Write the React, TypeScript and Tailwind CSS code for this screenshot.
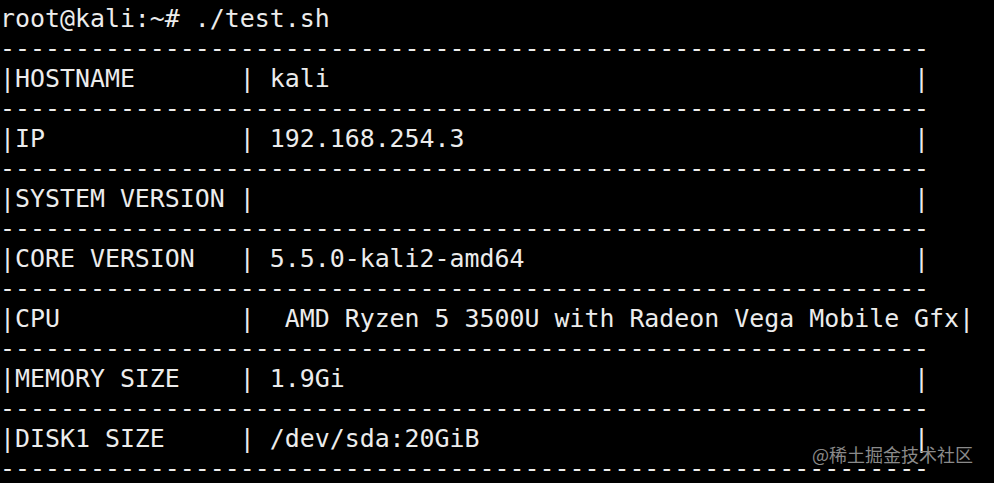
const rows = [
  ["HOSTNAME", " kali"],
  ["IP", " 192.168.254.3"],
  ["SYSTEM VERSION", ""],
  ["CORE VERSION", " 5.5.0-kali2-amd64"],
  ["CPU", "  AMD Ryzen 5 3500U with Radeon Vega Mobile Gfx"],
  ["MEMORY SIZE", " 1.9Gi"],
  ["DISK1 SIZE", " /dev/sda:20GiB"],
];

const divider = "-".repeat(62);

export default function App() {
  const lines: string[] = ["root@kali:~# ./test.sh", divider];
  rows.forEach(([key, value]) => {
    lines.push("|" + key.padEnd(15) + "|" + value.padEnd(44) + "|");
    lines.push(divider);
  });

  return (
    <div className="relative w-[994px] h-[483px] overflow-hidden bg-black">
      <pre className="pt-[4px] font-['DejaVu_Sans_Mono',monospace] text-[24.9px] leading-[30px] text-[#ececec] whitespace-pre">
        {lines.join("\n")}
      </pre>
      <div className="absolute left-[812px] top-[442px] font-['Noto_Sans_CJK_SC',sans-serif] text-[18px] leading-[24px] text-[#8a8a8a]">
        @稀土掘金技术社区
      </div>
    </div>
  );
}
